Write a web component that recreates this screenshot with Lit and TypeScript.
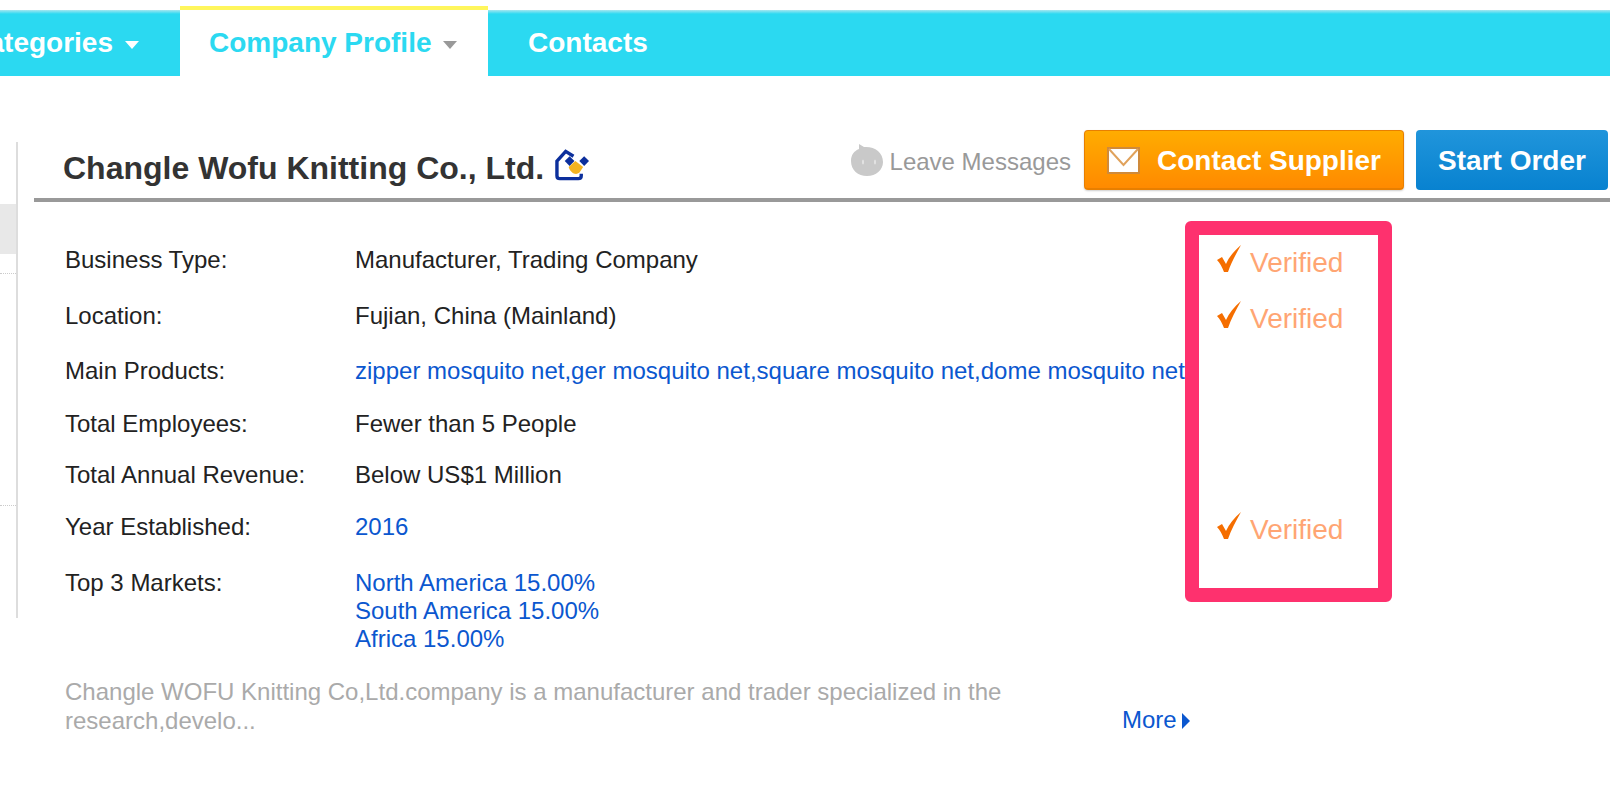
import { LitElement, html, css, svg } from "lit";
import { customElement } from "lit/decorators.js";

const BLUE = "blue";

const rows = [
  { label: "Business Type:", value: ["Manufacturer, Trading Company"], verified: true, h: 56 },
  { label: "Location:", value: ["Fujian, China (Mainland)"], verified: true, h: 55 },
  { label: "Main Products:", value: ["zipper mosquito net,ger mosquito net,square mosquito net,dome mosquito net"], link: BLUE, h: 53 },
  { label: "Total Employees:", value: ["Fewer than 5 People"], h: 51 },
  { label: "Total Annual Revenue:", value: ["Below US$1 Million"], h: 52 },
  { label: "Year Established:", value: ["2016"], link: BLUE, verified: true, h: 56 },
  { label: "Top 3 Markets:", value: ["North America 15.00%", "South America 15.00%", "Africa 15.00%"], link: BLUE, h: 84 },
];

const checkIcon = svg`<svg class="check" width="26" height="28" viewBox="0 0 26 28">
  <path d="M1 15 L6 12 L10 19 C13 12 18 6 25 0 C20 9 15 18 12 27 L8 27 C6 22 4 18 1 15 Z" fill="#f56e00"/>
</svg>`;

const logoIcon = svg`<svg width="35" height="32" viewBox="0 0 36 32">
  <path d="M19 7 L11 2 L2 12 V27 C2 29 3 30 5 30 H24 C26 30 27 29 27 27 V25" fill="none" stroke="#0c2f9c" stroke-width="3.500"/>
  <path d="M15 7 L20 12 L15 17 L10 12 Z" fill="#0c2f9c"/>
  <path d="M30 7 L35 12 L30 17 L25 12 Z" fill="#0c2f9c"/>
  <path d="M14 18 L21 12 L29 18 L25 24 C21 27 16 24 14 18 Z" fill="#f3b321"/>
</svg>`;

const mascotIcon = svg`<svg width="34" height="34" viewBox="0 0 34 34">
  <path d="M9 1 L14 4 C24 3 33 9 33 19 C33 27 26 33 17 33 C8 33 1 27 1 18 C1 12 4 8 9 6 Z" fill="#c9c9c9"/>
  <ellipse cx="13" cy="19" rx="1" ry="2.500" fill="#e4e4e4"/>
  <ellipse cx="25" cy="19" rx="1" ry="2.500" fill="#e4e4e4"/>
</svg>`;

const mailIcon = svg`<svg width="33" height="27" viewBox="0 0 33 27">
  <rect x="1" y="1" width="31" height="25" fill="#fff" stroke="#cf8a3a" stroke-width="2"/>
  <path d="M2 2 L16.500 18 L31 2" fill="none" stroke="#e0a25c" stroke-width="2"/>
</svg>`;

@customElement("app-root")
export class AppRoot extends LitElement {
  static styles = css`
    :host {
      display: block;
      width: 1610px;
      height: 790px;
      overflow: hidden;
      background: #fff;
      font-family: "Liberation Sans", Arial, sans-serif;
      color: #222;
    }
    .nav {
      display: flex;
      height: 66px;
      margin-top: 10px;
      background: linear-gradient(#a6e6ef 0, #2bd9f1 4px);
      font-size: 28px;
      font-weight: bold;
      color: #fff;
    }
    .tab {
      display: flex;
      align-items: center;
      white-space: nowrap;
      box-sizing: border-box;
    }
    .tab.clipped {
      width: 180px;
      justify-content: flex-end;
      overflow: hidden;
      padding-right: 41px;
      flex-shrink: 0;
    }
    .tab.active {
      width: 308px;
      height: 70px;
      margin-top: -4px;
      padding-left: 29px;
      background: #fff;
      border-top: 4px solid #fff65c;
      color: #2bd9f1;
    }
    .tab.plain {
      padding-left: 40px;
    }
    .caret {
      flex-shrink: 0;
      width: 0;
      height: 0;
      margin-left: 12px;
      margin-top: 3px;
      border-left: 7px solid transparent;
      border-right: 7px solid transparent;
      border-top: 8px solid #fff;
    }
    .tab.active .caret {
      border-top-color: #999;
    }
    .body {
      display: flex;
      align-items: flex-start;
      margin-top: 54px;
    }
    .sidebar {
      flex: none;
      width: 16px;
      height: 476px;
      margin-top: 12px;
      border-right: 2px solid #ddd;
    }
    .sidebar-active {
      height: 50px;
      margin-top: 62px;
      background: #e8e8e8;
    }
    .dots {
      border-top: 1px dotted #ccc;
      height: 0;
    }
    .dots.first {
      margin-top: 19px;
    }
    .dots.second {
      margin-top: 231px;
    }
    .main {
      position: relative;
      flex: 1;
      margin-left: 16px;
    }
    .head {
      display: flex;
      align-items: flex-start;
      height: 68px;
      padding-right: 2px;
      border-bottom: 4px solid #999;
    }
    .title {
      display: flex;
      align-items: center;
      gap: 11px;
      padding: 20px 0 0 29px;
      font-size: 32px;
      font-weight: bold;
      color: #333;
      white-space: nowrap;
    }
    .title svg {
      margin-top: -7px;
    }
    .actions {
      display: flex;
      align-items: center;
      margin-left: auto;
    }
    .leave {
      display: flex;
      align-items: center;
      gap: 6px;
      margin-right: 13px;
      font-size: 24px;
      color: #999;
    }
    .leave span {
      padding-top: 4px;
    }
    .btn {
      display: flex;
      align-items: center;
      justify-content: center;
      box-sizing: border-box;
      height: 60px;
      border-radius: 4px;
      color: #fff;
      font-size: 28px;
      font-weight: bold;
    }
    .btn.contact {
      width: 320px;
      gap: 17px;
      padding-top: 2px;
      background: linear-gradient(#ffac00, #ff8a00);
      border: 1px solid #e87f00;
      border-bottom-width: 2px;
      box-shadow: 0 1px 2px rgba(0, 0, 0, 0.2);
    }
    .btn.order {
      width: 192px;
      margin-left: 12px;
      padding-top: 1px;
      background: linear-gradient(#2095db, #0882d0);
    }
    .rows {
      padding: 44px 0 0 31px;
    }
    .row {
      display: grid;
      grid-template-columns: 290px 862px auto;
      font-size: 24px;
      line-height: 28px;
      white-space: nowrap;
    }
    .link {
      color: #0b57cf;
    }
    .verified {
      display: flex;
      align-items: flex-start;
      gap: 8px;
      margin-top: 2px;
      margin-left: -1px;
      font-size: 28px;
      line-height: 30px;
      color: #ffa573;
    }
    .check {
      margin-top: -3px;
      flex: none;
    }
    .summary {
      display: flex;
      align-items: flex-end;
      margin-top: 24px;
      padding-left: 31px;
      font-size: 24px;
      line-height: 29px;
      color: #aaa;
    }
    .summary p {
      width: 1000px;
      margin: 0;
    }
    .more {
      display: flex;
      align-items: center;
      gap: 5px;
      margin-left: 57px;
      margin-bottom: 1px;
      color: #0b57cf;
    }
    .more i {
      width: 0;
      height: 0;
      margin-top: 3px;
      border-top: 8px solid transparent;
      border-bottom: 8px solid transparent;
      border-left: 8px solid #0b57cf;
    }
    .callout {
      position: absolute;
      left: 1151px;
      top: 91px;
      width: 207px;
      height: 381px;
      box-sizing: border-box;
      border: 14px solid #fe316e;
      border-radius: 6px;
    }
  `;

  protected render() {
    return html`
      <div class="nav">
        <div class="tab clipped">Product Categories<span class="caret"></span></div>
        <div class="tab active">Company Profile<span class="caret"></span></div>
        <div class="tab plain">Contacts</div>
      </div>
      <div class="body">
        <div class="sidebar">
          <div class="sidebar-active"></div>
          <div class="dots first"></div>
          <div class="dots second"></div>
        </div>
        <div class="main">
          <div class="head">
            <div class="title">Changle Wofu Knitting Co., Ltd. ${logoIcon}</div>
            <div class="actions">
              <div class="leave">${mascotIcon}<span>Leave Messages</span></div>
              <div class="btn contact">${mailIcon}Contact Supplier</div>
              <div class="btn order">Start Order</div>
            </div>
          </div>
          <div class="rows">
            ${rows.map(
              (r) => html`
                <div class="row" style="height: ${r.h}px">
                  <div>${r.label}</div>
                  <div class="${r.link ? "link" : ""}">
                    ${r.value.map((v) => html`<div>${v}</div>`)}
                  </div>
                  ${r.verified ? html`<div class="verified">${checkIcon}Verified</div>` : ""}
                </div>
              `
            )}
          </div>
          <div class="summary">
            <p>Changle WOFU Knitting Co,Ltd.company is a manufacturer and trader specialized in the research,develo...</p>
            <div class="more">More<i></i></div>
          </div>
          <div class="callout"></div>
        </div>
      </div>
    `;
  }
}
